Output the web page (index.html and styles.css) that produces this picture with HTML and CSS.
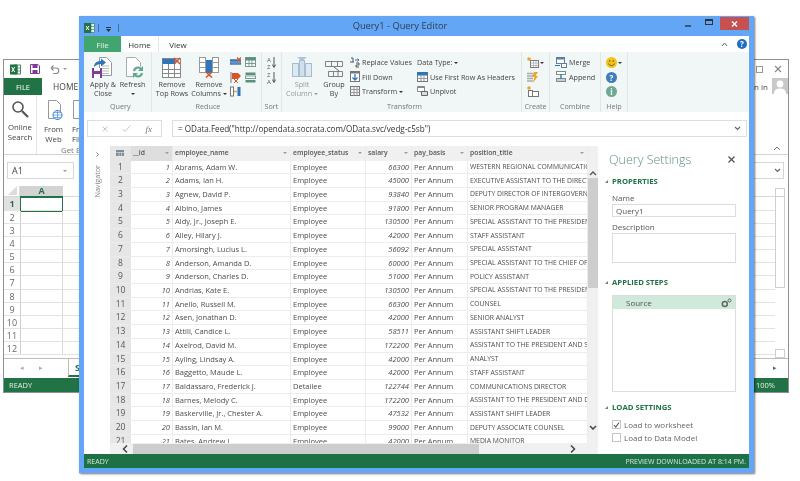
FILE: index.html
```html
<!DOCTYPE html>
<html lang="en">
<head>
<meta charset="utf-8">
<title>Query1 - Query Editor</title>
<link rel="stylesheet" href="styles.css">
</head>
<body>
<div class="desktop">

<section class="win back">
  <header class="b-title">
    <svg class="ic" width="11" height="11" viewBox="0 0 11 11"><rect x="4" y="1" width="6.500" height="9" fill="#fff" stroke="#217346" stroke-width=".8"/><path d="M7.500 1v9M4 4h6.500M4 7h6.500" stroke="#217346" stroke-width=".7"/><rect y=".5" width="7" height="10" fill="#217346"/><path d="M1.700 3l3 5M4.700 3l-3 5" stroke="#fff"/></svg>
    <svg class="ic" width="10" height="10" viewBox="0 0 10 10"><path d="M.5.5h7.500l1.500 1.500v7.500H.5z" fill="#fff" stroke="#7d3c98"/><rect x="2.500" y="1" width="5" height="3" fill="#7d3c98"/><rect x="2.500" y="6" width="5" height="3.500" fill="#7d3c98"/></svg>
    <svg class="ic b-undo" width="10" height="9" viewBox="0 0 10 9"><path d="M1 3h5a2.500 2.500 0 0 1 0 5.500H3M1 3l2.500-2.500M1 3l2.500 2.500" fill="none" stroke="#8a8a8a" stroke-width="1.100"/></svg>
    <i class="caret b-ucaret"></i>
    <svg class="ic b-redo" width="5" height="9" viewBox="0 0 5 9"><path d="M5 1.500A3.500 3.500 0 0 0 1 4.500a3.500 3.500 0 0 0 4 3" fill="none" stroke="#b5b5b5" stroke-width="1.100"/></svg>
    <span class="grow"></span>
    <span class="b-restore"></span>
    <svg class="b-x" width="8" height="8" viewBox="0 0 8 8"><path d="M1 1l6 6M7 1L1 7" stroke="#8a8a8a" stroke-width="1.200"/></svg>
  </header>
  <nav class="b-tabs">
    <span class="b-file">FILE</span>
    <span class="b-home">HOME</span>
    <span class="grow"></span>
    <span class="b-sign">Sign in</span>
    <svg class="b-avatar" width="16" height="16" viewBox="0 0 16 16"><rect width="16" height="16" fill="#c9c9c9"/><circle cx="8" cy="6" r="3.400" fill="#fff"/><path d="M2 16c0-4.500 3-5.500 6-5.500s6 1 6 5.500z" fill="#fff"/></svg>
  </nav>
  <div class="b-ribbon">
    <div class="b-btn b-online">
      <svg width="18" height="18" viewBox="0 0 18 18"><circle cx="7" cy="7" r="5" fill="none" stroke="#555" stroke-width="1.600"/><path d="M11 11l6 6" stroke="#555" stroke-width="2.200"/></svg>
      <span>Online<br>Search</span>
    </div>
    <div class="b-group">
      <div class="b-gbody">
        <div class="b-btn b-web">
          <svg width="18" height="20" viewBox="0 0 18 20"><path d="M3.500.5h8l4 4v14h-12z" fill="#fff" stroke="#999"/><circle cx="12.500" cy="15" r="4.500" fill="#fff" stroke="#2b7cd3"/><path d="M8 15h9M12.500 10.500v9M9 12.500h7M9 17.500h7" stroke="#2b7cd3" stroke-width=".6"/></svg>
          <span>From<br>Web</span>
        </div>
        <div class="b-btn b-fi">
          <svg width="18" height="20" viewBox="0 0 18 20"><path d="M1.500.5h8l4 4v14h-12z" fill="#fff" stroke="#999"/></svg>
          <span>From<br>File</span>
        </div>
      </div>
      <span class="b-get">Get External Data</span>
    </div>
    <span class="grow"></span>
    <svg class="b-up" width="8" height="5" viewBox="0 0 8 5"><path d="M1 4l3-3 3 3" fill="none" stroke="#777"/></svg>
  </div>
  <div class="b-fbar">
    <div class="b-name"><span>A1</span><i class="caret"></i></div>
    <div class="b-fx"><svg width="7" height="5" viewBox="0 0 7 5"><path d="M1 1l2.500 2.500L6 1" fill="none" stroke="#666" stroke-width="1.200"/></svg></div>
  </div>
  <div class="b-sheet">
    <div class="b-grid">
      <div class="b-hrow"><span class="b-corner"><svg width="9" height="9" viewBox="0 0 9 9"><path d="M9 0v9H0z" fill="#dcdcdc"/></svg></span><span class="b-a">A</span><span class="grow"></span></div>
      <div class="b-row first"><span class="rn on">1</span><span class="b-sel"></span></div>
      <div class="b-row"><span class="rn">2</span></div>
      <div class="b-row"><span class="rn">3</span></div>
      <div class="b-row"><span class="rn">4</span></div>
      <div class="b-row"><span class="rn">5</span></div>
      <div class="b-row"><span class="rn">6</span></div>
      <div class="b-row"><span class="rn">7</span></div>
      <div class="b-row"><span class="rn">8</span></div>
      <div class="b-row"><span class="rn">9</span></div>
      <div class="b-row"><span class="rn">10</span></div>
      <div class="b-row"><span class="rn">11</span></div>
      <div class="b-row"><span class="rn">12</span></div>
    </div>
    <div class="b-vs"><span class="b-vs-up"></span><span class="b-vs-th"></span><span class="grow"></span><span class="b-vs-dn"></span></div>
  </div>
  <div class="b-tabsrow">
    <span class="b-nav">◂</span><span class="b-nav">▸</span>
    <span class="b-stab">S</span>
    <span class="grow"></span>
    <span class="b-hs">▸</span>
  </div>
  <footer class="b-status"><span>READY</span><span class="grow"></span><span>100%</span></footer>
</section>

<section class="win front">
  <header class="f-title">
    <svg class="f-logo" width="11" height="10" viewBox="0 0 11 10"><rect x="3" y=".5" width="7.500" height="9" fill="#e8f2ec" stroke="#217346" stroke-width=".6"/><path d="M7 .5v9M3 3.500h7M3 6.500h7" stroke="#217346" stroke-width=".6"/><rect width="7" height="10" fill="#217346"/><path d="M2 3l3 4M5 3L2 7" stroke="#fff"/></svg>
    <i class="f-pipe"></i>
    <svg class="f-qa" width="5" height="5" viewBox="0 0 5 5"><path d="M0 0h5v1H0zM0 2h5L2.500 5z" fill="#333"/></svg>
    <i class="f-pipe"></i>
    <h1 class="f-name">Query1 - Query Editor</h1>
    <svg class="f-ctl f-min" width="29" height="13" viewBox="0 0 29 13"><path d="M10 9h6" stroke="#333" stroke-width="1.400"/></svg>
    <svg class="f-ctl f-max" width="16" height="13" viewBox="0 0 16 13"><rect x="1.500" y="2.500" width="7" height="5" fill="none" stroke="#333"/><path d="M1 3h8" stroke="#333" stroke-width="2"/></svg>
    <span class="f-close"><svg width="7" height="6" viewBox="0 0 7 6"><path d="M1 .5l5 5M6 .5l-5 5" stroke="#fff" stroke-width="1.400"/></svg></span>
  </header>
  <nav class="f-tabs">
    <span class="f-file">File</span>
    <span class="f-tab on">Home</span>
    <span class="f-tab">View</span>
    <span class="grow"></span>
    <svg class="f-coll" width="7" height="5" viewBox="0 0 7 5"><path d="M1 4l2.500-3L6 4" fill="none" stroke="#666"/></svg>
    <span class="f-help">?</span>
  </nav>
  <div class="ribbon">
    <div class="grp g-query">
      <div class="grp-body">
        <div class="big w-apply">
          <svg class="ic-apply" width="20" height="21" viewBox="0 0 20 21"><path d="M7.500.5h7l5 5v13h-12z" fill="#fff" stroke="#999"/><path d="M10 9h7M10 11.500h7M10 14h7M10 16.500h7" stroke="#bbb"/><path d="M2 10c0-4 3-6 7-6V1.500l5 4-5 4V7C6 7 4 8 2 10z" fill="#2f76b8"/><rect y="11" width="10" height="10" fill="#7e3f98"/><rect x="2" y="11" width="6" height="3" fill="#fff"/><rect x="2" y="17" width="6" height="4" fill="#fff"/></svg>
          <span>Apply &amp;<br>Close</span>
        </div>
        <div class="big w-refresh">
          <svg class="ic-ref" width="18" height="21" viewBox="0 0 18 21"><path d="M.5.5h9l5 5v14H.5z" fill="#fff" stroke="#aaa"/><circle cx="12" cy="15" r="6" fill="#f1f7f6"/><path d="M8 14a4 4 0 0 1 7-2M16 16a4 4 0 0 1-7 2" fill="none" stroke="#5fa88e" stroke-width="2"/><path d="M17 9v5h-5zM7 21v-5h5z" fill="#5fa88e"/></svg>
          <span>Refresh<br><i class="caret dark"></i></span>
        </div>
      </div>
      <div class="grp-label">Query</div>
    </div>
    <div class="grp g-reduce">
      <div class="grp-body">
        <div class="big w-top">
          <svg width="20" height="21" viewBox="0 0 20 21"><rect x=".5" y="1.500" width="18" height="19" fill="#fff" stroke="#888"/><path d="M.5 12.500h18M.5 16.500h18M6.500 6v15M12.500 6v15" stroke="#888"/><rect x=".5" y="2" width="13" height="5" fill="#2f76b8"/><path d="M12 1l6 6M18 1l-6 6" stroke="#d9542b" stroke-width="1.600"/></svg>
          <span>Remove<br>Top Rows</span>
        </div>
        <div class="big w-col">
          <svg width="20" height="21" viewBox="0 0 20 21"><rect x=".5" y=".5" width="6" height="15" fill="#fff" stroke="#999"/><rect x="13.500" y=".5" width="6" height="15" fill="#fff" stroke="#999"/><path d="M.5 5.500h6M.5 10.500h6M13.500 5.500h6M13.500 10.500h6" stroke="#999"/><rect x="7" y="3" width="6" height="13" fill="#2f76b8"/><path d="M7 15l6 5.500M13 15l-6 5.500" stroke="#d9542b" stroke-width="1.600"/></svg>
          <span>Remove<br>Columns <i class="caret dark"></i></span>
        </div>
        <div class="mini-grid">
          <svg width="11" height="10" viewBox="0 0 11 10"><path d="M0 3.500h11M0 6.500h11" stroke="#2f76b8" stroke-width="2.500"/><path d="M1 7h9" stroke="#9a9a9a"/><path d="M7 .5l4 4M11 .5l-4 4" stroke="#d9542b" stroke-width="1.200"/></svg>
          <svg width="11" height="10" viewBox="0 0 11 10"><rect x=".5" y=".5" width="10" height="9" fill="#fff" stroke="#7a9a8e"/><rect x=".5" y=".5" width="10" height="3" fill="#5b8f7c"/><path d="M.5 6.500h10M4 3v6M7 3v6" stroke="#7a9a8e"/></svg>
          <svg width="11" height="11" viewBox="0 0 11 11"><path d="M1 0v11" stroke="#777"/><path d="M2 1h6l3 3-3 3H2z" fill="#d9542b"/><path d="M4 7l4 4M8 7l-4 4" stroke="#d9542b"/></svg>
          <svg width="11" height="11" viewBox="0 0 11 11"><rect x=".5" y=".5" width="10" height="2.500" fill="#5b8f7c"/><rect x=".5" y="4" width="10" height="2.500" fill="#fff" stroke="#7a9a8e"/><rect x=".5" y="8" width="10" height="2.500" fill="#5b8f7c"/></svg>
          <svg width="11" height="11" viewBox="0 0 11 11"><rect x=".5" y="1" width="3" height="9" fill="#fff" stroke="#777"/><rect x="7.500" y="1" width="3" height="9" fill="#2f76b8"/><path d="M4 5.500h3" stroke="#eba52c" stroke-width="1.500"/></svg>
        </div>
      </div>
      <div class="grp-label">Reduce</div>
    </div>
    <div class="grp g-sort">
      <div class="grp-body sort-col">
        <span class="az"><b>A<br>Z</b><svg width="4" height="11" viewBox="0 0 4 11"><path d="M2 0v10M.3 7.500L2 10.500l1.700-3" fill="none" stroke="#555"/></svg></span>
        <span class="az"><b>Z<br>A</b><svg width="4" height="11" viewBox="0 0 4 11"><path d="M2 0v10M.3 7.500L2 10.500l1.700-3" fill="none" stroke="#555"/></svg></span>
      </div>
      <div class="grp-label">Sort</div>
    </div>
    <div class="grp g-trans">
      <div class="grp-body">
        <div class="big w-split mut">
          <svg width="20" height="21" viewBox="0 0 20 21"><path d="M5 0h10l-5 4z" fill="#a9c4dc"/><rect x=".5" y="6.500" width="6" height="13" fill="#dce8f2" stroke="#a9bccc"/><rect x="7.500" y="3.500" width="5" height="16" fill="#cfdfec" stroke="#a9bccc"/><rect x="13.500" y="6.500" width="6" height="13" fill="#dce8f2" stroke="#a9bccc"/></svg>
          <span>Split<br>Column <i class="caret"></i></span>
        </div>
        <div class="big w-group">
          <svg width="19" height="21" viewBox="0 0 19 21"><path d="M.5 4.500h17v5H.5zM6.500 4.500v5M12.500 4.500v5M3.500 14.500h14v5h-14zM8.500 14.500v5M13 14.500v5" fill="none" stroke="#666" stroke-width=".8"/><path d="M9 10l5 4" stroke="#666"/></svg>
          <span>Group<br>By</span>
        </div>
        <div class="small-col c-rep">
          <div class="sm"><svg width="10" height="11" viewBox="0 0 10 11"><path d="M1 1h2v4M0 5h4M6 6h3v2H6v2h3" fill="none" stroke="#555"/><path d="M5 3h4M7.500 1.500L9 3 7.500 4.500" fill="none" stroke="#2f76b8"/></svg><span>Replace Values</span></div>
          <div class="sm"><svg width="10" height="11" viewBox="0 0 10 11"><rect x=".5" y=".5" width="9" height="10" fill="#fff" stroke="#777"/><rect x=".5" y=".5" width="9" height="2" fill="#777"/><path d="M5 3v6M2.500 6.500L5 9l2.500-2.500" fill="none" stroke="#2f76b8" stroke-width="1.300"/></svg><span>Fill Down</span></div>
          <div class="sm"><svg width="10" height="10" viewBox="0 0 10 10"><rect x=".5" y=".5" width="9" height="9" fill="#f6f6f6" stroke="#777"/><path d="M.5 3.500h9M.5 6.500h9M4 .5v9M7 .5v9" stroke="#999"/></svg><span>Transform <i class="caret dark"></i></span></div>
        </div>
        <div class="small-col c-use">
          <div class="sm"><span>Data Type: <i class="caret dark"></i></span></div>
          <div class="sm"><svg width="11" height="10" viewBox="0 0 11 10"><rect x=".5" y=".5" width="10" height="9" fill="#fff" stroke="#777"/><rect y="0" width="11" height="3.500" fill="#2f76b8"/><path d="M.5 6.500h10M4 3v6M7 3v6" stroke="#999"/></svg><span>Use First Row As Headers</span></div>
          <div class="sm"><svg width="11" height="10" viewBox="0 0 11 10"><path d="M.5.5h7v5h-7z" fill="#fff" stroke="#888"/><rect x=".5" y=".5" width="7" height="1.500" fill="#888"/><path d="M4.500 5.500h6v4h-6z" fill="#ddd" stroke="#666"/></svg><span>Unpivot</span></div>
        </div>
      </div>
      <div class="grp-label">Transform</div>
    </div>
    <div class="grp g-create">
      <div class="grp-body create-col">
        <span class="cr"><svg width="12" height="11" viewBox="0 0 12 11"><circle cx="2" cy="2" r="1.800" fill="#eba52c"/><rect x="3.500" y="3.500" width="8" height="7" fill="#fff" stroke="#777"/><path d="M3.500 6h8M3.500 8.500h8M6.500 3.500v7M9 3.500v7" stroke="#999" stroke-width=".6"/></svg><i class="caret dark"></i></span>
        <svg width="12" height="11" viewBox="0 0 12 11"><path d="M0 1.500h6M0 4h6M0 6.500h6M0 9h6" stroke="#aaa" stroke-width="1.400"/><path d="M7 0h4L8.500 4H11L6 11l1.500-6H5z" fill="#eba52c"/></svg>
        <svg width="12" height="11" viewBox="0 0 12 11"><circle cx="2" cy="2" r="1.800" fill="#eba52c"/><rect x="1.500" y="4.500" width="4" height="6" fill="#fff" stroke="#777"/><rect x="5.500" y="5.500" width="6" height="5" fill="#fff" stroke="#777"/></svg>
      </div>
      <div class="grp-label">Create</div>
    </div>
    <div class="grp g-combine">
      <div class="grp-body combine-col">
        <div class="sm"><svg width="12" height="11" viewBox="0 0 12 11"><rect x="1.500" y=".5" width="8" height="6" fill="#fff" stroke="#5f7f9e"/><rect x="1.500" y=".5" width="8" height="2" fill="#5f7f9e"/><rect x="6.500" y="6.500" width="5" height="4" fill="#fff" stroke="#5f7f9e"/><path d="M0 8.500h5" stroke="#2f76b8"/></svg><span>Merge</span></div>
        <div class="sm"><svg width="12" height="11" viewBox="0 0 12 11"><rect x="1.500" y=".5" width="9" height="3" fill="#fff" stroke="#78908c"/><rect x="1.500" y="7.500" width="9" height="3" fill="#ccc" stroke="#78908c"/><path d="M6 3.500v4" stroke="#2f76b8" stroke-width="1.400"/></svg><span>Append</span></div>
      </div>
      <div class="grp-label">Combine</div>
    </div>
    <div class="grp g-help">
      <div class="grp-body help-col">
        <span class="cr"><svg width="11" height="11" viewBox="0 0 11 11"><circle cx="5.500" cy="5.500" r="5.500" fill="#f3c414"/><circle cx="3.700" cy="4" r=".8" fill="#555"/><circle cx="7.300" cy="4" r=".8" fill="#555"/><path d="M2.500 6.500a3.200 3.200 0 0 0 6 0" fill="none" stroke="#555" stroke-width=".8"/></svg><i class="caret dark"></i></span>
        <span class="dot blue">?</span>
        <span class="dot teal">i</span>
      </div>
      <div class="grp-label">Help</div>
    </div>
  </div>
  <div class="fbar">
    <div class="fx-box">
      <svg width="6" height="6" viewBox="0 0 6 6"><path d="M.5.5l5 5M5.500.5l-5 5" stroke="#c4c4c4"/></svg>
      <svg width="9" height="7" viewBox="0 0 9 7"><path d="M.5 4l2.500 2.500L8.500.5" fill="none" stroke="#c4c4c4"/></svg>
      <span class="fx">fx</span>
    </div>
    <div class="f-input"><span>= OData.Feed("http://opendata.socrata.com/OData.svc/vedg-c5sb")</span><svg width="7" height="5" viewBox="0 0 7 5"><path d="M1 1l2.500 2.500L6 1" fill="none" stroke="#666" stroke-width="1.200"/></svg></div>
  </div>
  <div class="main">
    <aside class="navi"><svg class="navi-arrow" width="3" height="5" viewBox="0 0 3 5"><path d="M.5.5l2 2-2 2" fill="none" stroke="#777"/></svg><span class="navi-text">Navigator</span></aside>
    <div class="tablewrap">
      <div class="tablecol">
        <div class="tbl">
          <div class="r head"><span class="c-n"><svg width="8" height="6" viewBox="0 0 8 6"><rect width="8" height="6" fill="#7f8c99"/><path d="M0 2.500h8M3 2v4M5.500 2v4" stroke="#e6e6e6" stroke-width=".6"/></svg></span><span class="c-i sel">__id<i class="caret"></i></span><span class="c-e">employee_name<i class="caret"></i></span><span class="c-s">employee_status<i class="caret"></i></span><span class="c-m">salary<i class="caret"></i></span><span class="c-p">pay_basis<i class="caret"></i></span><span class="c-t">position_title<i class="caret"></i></span></div>
          <div class="r"><span class="c-n">1</span><span class="c-i">1</span><span class="c-e">Abrams, Adam W.</span><span class="c-s">Employee</span><span class="c-m">66300</span><span class="c-p">Per Annum</span><span class="c-t">WESTERN REGIONAL COMMUNICATIO</span></div>
          <div class="r"><span class="c-n">2</span><span class="c-i">2</span><span class="c-e">Adams, Ian H.</span><span class="c-s">Employee</span><span class="c-m">45000</span><span class="c-p">Per Annum</span><span class="c-t">EXECUTIVE ASSISTANT TO THE DIRECT</span></div>
          <div class="r"><span class="c-n">3</span><span class="c-i">3</span><span class="c-e">Agnew, David P.</span><span class="c-s">Employee</span><span class="c-m">93840</span><span class="c-p">Per Annum</span><span class="c-t">DEPUTY DIRECTOR OF INTERGOVERN</span></div>
          <div class="r"><span class="c-n">4</span><span class="c-i">4</span><span class="c-e">Albino, James</span><span class="c-s">Employee</span><span class="c-m">91800</span><span class="c-p">Per Annum</span><span class="c-t">SENIOR PROGRAM MANAGER</span></div>
          <div class="r"><span class="c-n">5</span><span class="c-i">5</span><span class="c-e">Aldy, Jr., Joseph E.</span><span class="c-s">Employee</span><span class="c-m">130500</span><span class="c-p">Per Annum</span><span class="c-t">SPECIAL ASSISTANT TO THE PRESIDEN</span></div>
          <div class="r"><span class="c-n">6</span><span class="c-i">6</span><span class="c-e">Alley, Hilary J.</span><span class="c-s">Employee</span><span class="c-m">42000</span><span class="c-p">Per Annum</span><span class="c-t">STAFF ASSISTANT</span></div>
          <div class="r"><span class="c-n">7</span><span class="c-i">7</span><span class="c-e">Amorsingh, Lucius L.</span><span class="c-s">Employee</span><span class="c-m">56092</span><span class="c-p">Per Annum</span><span class="c-t">SPECIAL ASSISTANT</span></div>
          <div class="r"><span class="c-n">8</span><span class="c-i">8</span><span class="c-e">Anderson, Amanda D.</span><span class="c-s">Employee</span><span class="c-m">60000</span><span class="c-p">Per Annum</span><span class="c-t">SPECIAL ASSISTANT TO THE CHIEF OF</span></div>
          <div class="r"><span class="c-n">9</span><span class="c-i">9</span><span class="c-e">Anderson, Charles D.</span><span class="c-s">Employee</span><span class="c-m">51000</span><span class="c-p">Per Annum</span><span class="c-t">POLICY ASSISTANT</span></div>
          <div class="r"><span class="c-n">10</span><span class="c-i">10</span><span class="c-e">Andrias, Kate E.</span><span class="c-s">Employee</span><span class="c-m">130500</span><span class="c-p">Per Annum</span><span class="c-t">SPECIAL ASSISTANT TO THE PRESIDEN</span></div>
          <div class="r"><span class="c-n">11</span><span class="c-i">11</span><span class="c-e">Anello, Russell M.</span><span class="c-s">Employee</span><span class="c-m">66300</span><span class="c-p">Per Annum</span><span class="c-t">COUNSEL</span></div>
          <div class="r"><span class="c-n">12</span><span class="c-i">12</span><span class="c-e">Asen, Jonathan D.</span><span class="c-s">Employee</span><span class="c-m">42000</span><span class="c-p">Per Annum</span><span class="c-t">SENIOR ANALYST</span></div>
          <div class="r"><span class="c-n">13</span><span class="c-i">13</span><span class="c-e">Attili, Candice L.</span><span class="c-s">Employee</span><span class="c-m">58511</span><span class="c-p">Per Annum</span><span class="c-t">ASSISTANT SHIFT LEADER</span></div>
          <div class="r"><span class="c-n">14</span><span class="c-i">14</span><span class="c-e">Axelrod, David M.</span><span class="c-s">Employee</span><span class="c-m">172200</span><span class="c-p">Per Annum</span><span class="c-t">ASSISTANT TO THE PRESIDENT AND S</span></div>
          <div class="r"><span class="c-n">15</span><span class="c-i">15</span><span class="c-e">Ayling, Lindsay A.</span><span class="c-s">Employee</span><span class="c-m">42000</span><span class="c-p">Per Annum</span><span class="c-t">ANALYST</span></div>
          <div class="r"><span class="c-n">16</span><span class="c-i">16</span><span class="c-e">Baggetto, Maude L.</span><span class="c-s">Employee</span><span class="c-m">42000</span><span class="c-p">Per Annum</span><span class="c-t">STAFF ASSISTANT</span></div>
          <div class="r"><span class="c-n">17</span><span class="c-i">17</span><span class="c-e">Baldassaro, Frederick J.</span><span class="c-s">Detailee</span><span class="c-m">122744</span><span class="c-p">Per Annum</span><span class="c-t">COMMUNICATIONS DIRECTOR</span></div>
          <div class="r"><span class="c-n">18</span><span class="c-i">18</span><span class="c-e">Barnes, Melody C.</span><span class="c-s">Employee</span><span class="c-m">172200</span><span class="c-p">Per Annum</span><span class="c-t">ASSISTANT TO THE PRESIDENT AND D</span></div>
          <div class="r"><span class="c-n">19</span><span class="c-i">19</span><span class="c-e">Baskerville, Jr., Chester A.</span><span class="c-s">Employee</span><span class="c-m">47532</span><span class="c-p">Per Annum</span><span class="c-t">ASSISTANT SHIFT LEADER</span></div>
          <div class="r"><span class="c-n">20</span><span class="c-i">20</span><span class="c-e">Bassin, Ian M.</span><span class="c-s">Employee</span><span class="c-m">99000</span><span class="c-p">Per Annum</span><span class="c-t">DEPUTY ASSOCIATE COUNSEL</span></div>
          <div class="r"><span class="c-n">21</span><span class="c-i">21</span><span class="c-e">Bates, Andrew J.</span><span class="c-s">Employee</span><span class="c-m">42000</span><span class="c-p">Per Annum</span><span class="c-t">MEDIA MONITOR</span></div>
        </div>
        <div class="hs">
          <svg class="hs-l" width="6" height="8" viewBox="0 0 6 8"><path d="M5 .5L1.500 4 5 7.500" fill="none" stroke="#444" stroke-width="1.500"/></svg>
          <span class="hs-th"></span>
          <svg class="hs-r" width="6" height="8" viewBox="0 0 6 8"><path d="M1 .5L4.500 4 1 7.500" fill="none" stroke="#444" stroke-width="1.500"/></svg>
        </div>
      </div>
      <div class="vs">
        <svg width="8" height="5" viewBox="0 0 8 5"><path d="M1 4l3-3 3 3" fill="none" stroke="#555" stroke-width="1.300"/></svg>
        <span class="vs-th"></span>
        <span class="grow"></span>
        <svg class="vs-dn" width="8" height="5" viewBox="0 0 8 5"><path d="M1 1l3 3 3-3" fill="none" stroke="#444" stroke-width="1.500"/></svg>
      </div>
    </div>
    <aside class="qs">
      <div class="qs-head"><h2>Query Settings</h2><svg width="7" height="7" viewBox="0 0 7 7"><path d="M.5.5l6 6M6.500.5l-6 6" stroke="#555" stroke-width="1.300"/></svg></div>
      <h3 class="sec"><i class="tri"></i>PROPERTIES</h3>
      <label class="lbl">Name</label>
      <div class="inp">Query1</div>
      <label class="lbl l2">Description</label>
      <div class="ta"></div>
      <h3 class="sec s2"><i class="tri"></i>APPLIED STEPS</h3>
      <div class="steps">
        <div class="step"><span>Source</span><svg width="11" height="10" viewBox="0 0 11 10"><circle cx="3.800" cy="6" r="2.500" fill="none" stroke="#666" stroke-width="1.500"/><circle cx="8.500" cy="2.500" r="1.500" fill="none" stroke="#666" stroke-width="1"/></svg></div>
      </div>
      <h3 class="sec s3"><i class="tri"></i>LOAD SETTINGS</h3>
      <div class="chk"><span class="box"><svg width="7" height="6" viewBox="0 0 7 6"><path d="M1 3l1.800 2L6 .5" fill="none" stroke="#555" stroke-width="1.100"/></svg></span>Load to worksheet</div>
      <div class="chk"><span class="box"></span>Load to Data Model</div>
    </aside>
  </div>
  <footer class="f-status"><span>READY</span><span class="grow"></span><span>PREVIEW DOWNLOADED AT 8:14 PM.</span></footer>
</section>

</div>
</body>
</html>
```

FILE: styles.css
```css
*{box-sizing:border-box}
html,body{margin:0;padding:0;background:#fff}
body{font-family:"Open Sans","Noto Sans",sans-serif;font-size:7.5px;color:#444}
h1,h2,h3{margin:0;font-weight:400}
i{font-style:normal}
svg{display:block;flex:none}
.desktop{position:relative;width:800px;height:481px;overflow:hidden;background:#fff;filter:blur(.3px)}
.win{position:absolute;display:flex;flex-direction:column}
.grow{flex:1 1 0}
.caret{display:inline-block;width:0;height:0;border:2px solid transparent;border-top:2.500px solid #999;border-bottom:0;vertical-align:middle}
.caret.dark{border-top-color:#333}

/* back window */
.back{left:3px;top:59px;width:786px;height:334px;background:#fff;border:1px solid #8f8f8f}
.b-title{height:18px;display:flex;align-items:center;padding:0 0 0 6px;gap:9px}
.b-undo{margin-left:1px}
.b-ucaret{margin-left:-6px}
.b-redo{margin-left:3px}
.b-restore{width:7px;height:7px;border:1px solid #999;margin-right:1px}
.b-x{margin:0 6px 0 1px}
.b-tabs{height:17px;display:flex;align-items:stretch;font-size:8.500px}
.b-file{width:38px;background:#217346;color:#fff;display:flex;align-items:center;justify-content:center;font-size:7.500px}
.b-home{margin-left:11px;line-height:17px;color:#444}
.b-sign{line-height:17px;font-size:8px;margin-right:4px;color:#444}
.b-ribbon{height:60px;display:flex;border-bottom:1px solid #d4d4d4;font-size:7.800px}
.b-btn{display:flex;flex-direction:column;align-items:center;padding-top:5px;text-align:center;line-height:10px;gap:4px;color:#444}
.b-online{width:33px;border-right:1px solid #e3e3e3}
.b-group{width:112px;display:flex;flex-direction:column;align-items:center}
.b-gbody{align-self:stretch;display:flex;flex:1 1 0}
.b-web{width:33px}
.b-fi{width:36px;align-items:flex-start;text-align:left;padding-left:2px}
.b-get{color:#777;line-height:12px}
.b-up{align-self:flex-end;margin:0 7px 3px 0}
.b-fbar{height:31px;display:flex;align-items:flex-start;padding:7px 4px 0 3px;gap:8px}
.b-name{width:67px;height:17px;border:1px solid #d6d6d6;display:flex;align-items:center;justify-content:space-between;padding:0 6px 0 4px;font-size:9px}
.b-fx{flex:1 1 0;height:17px;border:1px solid #d6d6d6;display:flex;align-items:center;justify-content:flex-end;padding-right:2px}
.b-sheet{flex:1 1 0;display:flex;min-height:0}
.b-grid{flex:1 1 0;min-width:0}
.b-hrow{height:11px;display:flex;border-bottom:1px solid #d8d8d8}
.b-corner{width:16px;display:flex;justify-content:flex-end;align-items:flex-end;padding:0 2px 1px 0;border-right:1px solid #d8d8d8}
.b-a{width:43px;background:#d3d3d3;color:#217346;font-weight:700;font-size:9px;line-height:10px;text-align:center;border-bottom:1px solid #217346;height:11px}
.b-row{height:13.100px;display:flex;position:relative;border-bottom:1px solid #e2e2e2;background:linear-gradient(#d8d8d8,#d8d8d8) 58px 0/1px 100% no-repeat}
.first{height:14px}
.rn{width:17px;height:100%;border-right:1px solid #cfcfcf;background:#fff;font-size:9px;line-height:13px;text-align:center;color:#666}
.rn.on{background:#e1e1e1;color:#217346;font-weight:700}
.b-sel{position:absolute;left:16px;top:0;width:43px;height:14.500px;border:1.500px solid #217346}
.b-vs{width:13px;display:flex;flex-direction:column;padding-top:2px;padding-right:3px}
.b-vs-up,.b-vs-dn{height:9px;border:1px solid #cfcfcf;width:10px}
.b-vs-th{height:91px;width:10px;border:1px solid #cfcfcf;border-top:0}
.b-tabsrow{height:20px;display:flex;align-items:flex-start;border-top:1px solid #bcbcbc;font-size:7px;color:#aaa;padding-left:16px;gap:15px;line-height:17px}
.b-stab{margin-left:10px;height:18px;color:#217346;font-weight:700;font-size:9px;line-height:17px;border-bottom:2px solid #217346;border-left:1px solid #bcbcbc;width:40px;padding-left:6px}
.b-hs{margin-right:11px;color:#666;line-height:12px;margin-top:3px}
.b-status{height:14px;background:#217346;color:#e6efe9;display:flex;align-items:center;padding:0 13px 0 5px;font-size:7.500px}

/* front window */
.front{left:79px;top:16px;width:675px;height:457px;background:#64a6f6;padding:0 5px 5px;box-shadow:1px 1px 2px rgba(0,0,0,.55)}
.f-title{height:20px;display:flex;align-items:flex-start;position:relative}
.f-logo{margin:7px 3px 0 0}
.f-pipe{width:1px;height:8px;background:#4a6f96;margin-top:8px}
.f-qa{margin:11px 7px 0 7px}
.f-name{position:absolute;left:0;right:33px;top:3px;text-align:center;font-size:9.300px;line-height:14px;color:#2c3e50}
.f-min{margin-left:auto;margin-top:1px}
.f-max{margin-top:1px}
.f-close{width:29px;height:13px;margin-top:1px;background:#c75050;display:flex;align-items:center;justify-content:center}
.f-tabs{height:16px;background:#fff;display:flex;font-size:8px;align-items:stretch}
.f-file{width:37px;background:#41a56f;color:#e6f4ec;display:flex;align-items:center;justify-content:center}
.f-tab{width:38px;display:flex;align-items:center;justify-content:center;color:#333}
.f-tab.on{background:#fff;border-right:1px solid #e4e4e4}
.f-coll{align-self:center;margin-right:9px}
.f-help{width:10px;height:10px;margin:3px 2px 0 0;border-radius:50%;background:#1f6fc0;color:#fff;font-size:8px;font-weight:700;line-height:10px;text-align:center}
.ribbon{height:60px;background:#f1f7f6;display:flex;font-size:7.200px;color:#444}
.grp{display:flex;flex-direction:column;border-right:1px solid #dfe6e4;padding-top:5px}
.grp-body{flex:1 1 0;display:flex;min-height:0}
.grp-label{height:12px;font-size:7.200px;line-height:12px;text-align:center;color:#777}
.g-query{width:68px;padding-left:5.500px}
.g-reduce{width:110px;padding-left:3px}
.g-sort{width:20px}
.g-trans{width:240px;padding-left:6px}
.g-create{width:28px}
.g-combine{width:51px}
.g-help{width:27px}
.big{display:flex;flex-direction:column;align-items:center;line-height:9px;text-align:center;gap:1.500px;white-space:nowrap}
.w-apply{width:27px;margin-right:3.500px}
.ic-apply{margin-right:3px}
.w-refresh{width:25px}
.ic-ref{margin-left:4px}
.w-top{width:34px;margin-right:2px}
.w-col{width:36px;margin-right:3px}
.mini-grid{display:grid;grid-template-columns:15px 11px;grid-auto-rows:14.500px}
.sort-col{flex-direction:column;align-items:center;gap:2px}
.az{display:flex;gap:1px;font-size:6px;line-height:6.500px;color:#555}
.az b{font-weight:400}
.mut{color:#9a9a9a}
.w-split{width:28px;margin-right:4px}
.w-group{width:28px;margin-right:2px}
.small-col{display:flex;flex-direction:column;gap:4px}
.c-rep{width:67px}
.c-use{width:100px}
.sm{height:10.500px;display:flex;align-items:center;gap:2px;white-space:nowrap}
.create-col{flex-direction:column;padding:0 0 0 5px;gap:3.500px}
.cr{display:flex;align-items:center;gap:1px}
.combine-col{flex-direction:column;padding:0 0 0 5px;gap:4px}
.help-col{flex-direction:column;padding:0 0 0 5px;gap:3.500px}
.dot{width:11px;height:11px;border-radius:50%;color:#fff;font-size:8px;font-weight:700;line-height:11px;text-align:center}
.dot.blue{background:#3f7cb8}
.dot.teal{background:#6fa893}
.fbar{height:34px;background:#fff;display:flex;padding:8px 2px 0 3px;gap:10px}
.fx-box{width:75px;height:17px;border:1px solid #dedede;display:flex;align-items:center;justify-content:space-between;padding:0 9px 0 14px}
.fx{font-family:"Liberation Serif",serif;font-style:italic;font-size:9px;color:#777}
.f-input{flex:1 1 0;height:17px;border:1px solid #dedede;display:flex;align-items:center;justify-content:space-between;padding:0 5px;font-size:8.100px;color:#333}
.main{flex:1 1 0;min-height:0;display:flex;background:#fff}
.navi{width:26px;display:flex;flex-direction:column;align-items:center;color:#888;padding-top:6px}
.navi-text{writing-mode:vertical-rl;transform:rotate(180deg);font-size:7.200px;margin-top:8px}
.tablewrap{width:488px;display:flex;min-height:0}
.tablecol{width:478px;display:flex;flex-direction:column}
.tbl{flex:1 1 0;min-height:0;overflow:hidden}
.r{display:grid;grid-template-columns:21px 42px 118px 75px 46px 56px 120px;height:13.720px;line-height:12.900px;border-bottom:1px solid #ececec;white-space:nowrap;font-size:7.500px;color:#4c4c4c}
.r span{overflow:hidden;padding:0 2px;border-right:1px solid #ececec}
.r .c-n{background:#e6e6e6;text-align:center;color:#555;font-size:8.500px;border-right:0}
.r .c-i,.r .c-m{text-align:right;font-style:italic}
.r .c-t{font-size:6.800px;padding-top:.5px}
.r.head{height:14.500px;line-height:14px;background:#f0f0f0;font-weight:600;border-bottom:0;color:#555;font-size:6.800px}
.head span{position:relative;display:flex;align-items:center;justify-content:space-between;padding-right:3px}
.r.head .c-t{font-size:6.800px;padding-top:0}
.r.head .c-i,.r.head .c-m{text-align:left;font-style:normal}
.head .c-n{justify-content:center}
.head .sel{background:#dedede}
.hs{height:11px;display:flex;align-items:center;background:#f0f0f0;padding:0 0 0 12px}
.hs-th{width:346px;height:10px;background:#cdcdcd;margin-left:5px}
.hs-r{margin-left:91px}
.vs{width:10px;display:flex;flex-direction:column;align-items:center;background:#f0f0f0;padding-top:25px}
.vs-th{width:10px;height:110px;background:#cdcdcd;margin-top:2px}
.vs-dn{margin-bottom:24px}
.qs{flex:1 1 0;padding:5px 0 0 6px;margin-left:2px;color:#555}
.qs-head{display:flex;align-items:center;justify-content:space-between;padding:0 14px 0 3px;height:16px}
.qs-head h2{font-size:12.500px;color:#5e8f80;white-space:nowrap;font-weight:300}
.sec{position:relative;font-size:7.700px;font-weight:700;color:#217346;padding-left:6px;margin-top:8px;line-height:12px;height:12px}
.tri{position:absolute;left:-1px;top:5px;width:0;height:0;border-left:3px solid transparent;border-bottom:3px solid #777}
.lbl{display:block;font-size:8px;line-height:11px;padding-left:6px;margin-top:5px}
.l2{margin-top:4px}
.inp{margin:1px 0 0 6px;width:124px;height:13px;border:1px solid #dcdcdc;font-size:8px;line-height:11px;padding-left:3px}
.ta{margin:1px 0 0 6px;width:124px;height:30px;border:1px solid #dcdcdc}
.s2{margin-top:13px}
.steps{margin:7px 0 0 6px;width:124px;height:97px;border:1px solid #dcdcdc}
.step{height:13px;background:#cfe9da;display:flex;align-items:center;justify-content:space-between;padding:0 3px 0 13px;font-size:8px}
.s3{margin-top:9px}
.chk{display:flex;align-items:center;gap:3px;margin-left:6px;height:13px;font-size:8px;color:#666}
.s3 + .chk{margin-top:5px}
.box{width:9px;height:9px;border:1px solid #c4c4c4;display:flex;align-items:center;justify-content:center}
.f-status{height:14px;background:#1e7145;color:#d6e8dd;display:flex;align-items:center;padding:0 3px;font-size:7px}
```
